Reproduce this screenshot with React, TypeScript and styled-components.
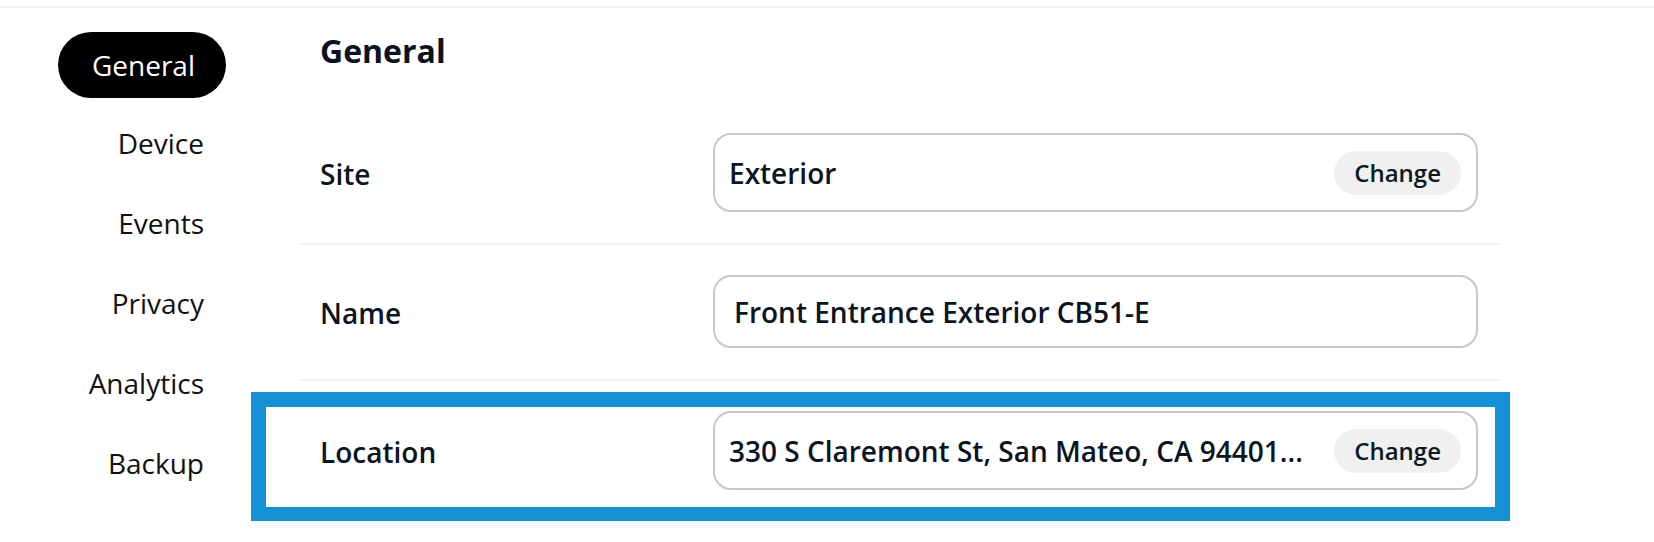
import React from 'react';
import styled, { createGlobalStyle } from 'styled-components';

// ===== グローバルスタイル =====
const GlobalStyle = createGlobalStyle`
  html, body {
    margin: 0;
    padding: 0;
    background: #ffffff;
    font-family: "Open Sans", "Noto Sans", "Liberation Sans", sans-serif;
    color: #0c1420;
  }
`;

// 上部の薄い区切り線
const TopRule = styled.div`
  margin-top: 6px;
  height: 2px;
  background: #f1f1f1;
`;

// ページ全体（サイドナビ + 本文）
const Page = styled.div`
  display: flex;
  align-items: flex-start;
`;

// 左側のナビゲーション
const SideNav = styled.nav`
  width: 226px;
  margin-right: 74px;
  padding-top: 24px;
  display: flex;
  flex-direction: column;
  align-items: flex-end;
  gap: 14px;
`;

// ナビ項目（active のときは黒いピル）
const NavItem = styled.div<{ $active?: boolean }>`
  height: 66px;
  line-height: ${(p) => (p.$active ? '66px' : '63px')};
  padding: ${(p) => (p.$active ? '0 31px 0 34px' : '0 22px')};
  border-radius: 33px;
  font-size: 28px;
  font-weight: 400;
  color: ${(p) => (p.$active ? '#ffffff' : '#111111')};
  background: ${(p) => (p.$active ? '#000000' : 'transparent')};
  white-space: nowrap;
`;

// 本文カラム
const Content = styled.main`
  width: 1200px;
  padding-top: 22px;
`;

const Heading = styled.h2`
  margin: 0 0 31px;
  padding-left: 20px;
  font-size: 32px;
  line-height: 42px;
  font-weight: 700;
  color: #0b1220;
`;

// 設定の1行
const Row = styled.div<{ $last?: boolean }>`
  position: relative;
  display: flex;
  align-items: center;
  padding: 30px 22px 31px 20px;
  border-bottom: ${(p) => (p.$last ? 'none' : '2px solid #f1f1f1')};
`;

const Label = styled.div`
  width: 393px;
  flex-shrink: 0;
  padding-top: 3px;
  font-size: 28px;
  font-weight: 600;
  line-height: 38px;
  color: #0b1421;
`;

// 値の入った枠
const ValueBox = styled.div<{ $inset: number }>`
  flex: 1;
  display: flex;
  align-items: center;
  gap: 16px;
  padding: 15.5px 15px 15.5px ${(p) => p.$inset}px;
  border: 2px solid #c4c8cc;
  border-radius: 18px;
  min-width: 0;
`;

const ValueText = styled.span`
  flex: 1;
  min-width: 0;
  font-size: 28px;
  font-weight: 600;
  line-height: 38px;
  color: #0b1421;
  white-space: nowrap;
  overflow: hidden;
`;

const ChangeButton = styled.button`
  flex-shrink: 0;
  height: 44px;
  padding: 0 20px;
  border: none;
  border-radius: 22px;
  background: #f0f0f0;
  font-family: inherit;
  font-size: 24px;
  font-weight: 600;
  color: #0f1720;
  cursor: pointer;
`;

// 注釈用の青い枠（行の上に重ねる）
const Highlight = styled.div`
  position: absolute;
  left: -49px;
  right: -10px;
  top: 11px;
  bottom: -1px;
  border: 15px solid #1391d7;
  pointer-events: none;
`;

const navItems = ['General', 'Device', 'Events', 'Privacy', 'Analytics', 'Backup'];

interface Field {
  label: string;
  value: string;
  inset: number;
  changeable: boolean;
  highlighted?: boolean;
}

const fields: Field[] = [
  { label: 'Site', value: 'Exterior', inset: 14, changeable: true },
  { label: 'Name', value: 'Front Entrance Exterior CB51-E', inset: 19, changeable: false },
  {
    label: 'Location',
    value: '330 S Claremont St, San Mateo, CA 94401...',
    inset: 14,
    changeable: true,
    highlighted: true,
  },
];

const App: React.FC = () => (
  <>
    <GlobalStyle />
    <TopRule />
    <Page>
      <SideNav>
        {navItems.map((item, i) => (
          <NavItem key={item} $active={i === 0}>
            {item}
          </NavItem>
        ))}
      </SideNav>
      <Content>
        <Heading>General</Heading>
        {fields.map((f, i) => (
          <Row key={f.label} $last={i === fields.length - 1}>
            <Label>{f.label}</Label>
            <ValueBox $inset={f.inset}>
              <ValueText>{f.value}</ValueText>
              {f.changeable && <ChangeButton>Change</ChangeButton>}
            </ValueBox>
            {f.highlighted && <Highlight />}
          </Row>
        ))}
      </Content>
    </Page>
  </>
);

export default App;
